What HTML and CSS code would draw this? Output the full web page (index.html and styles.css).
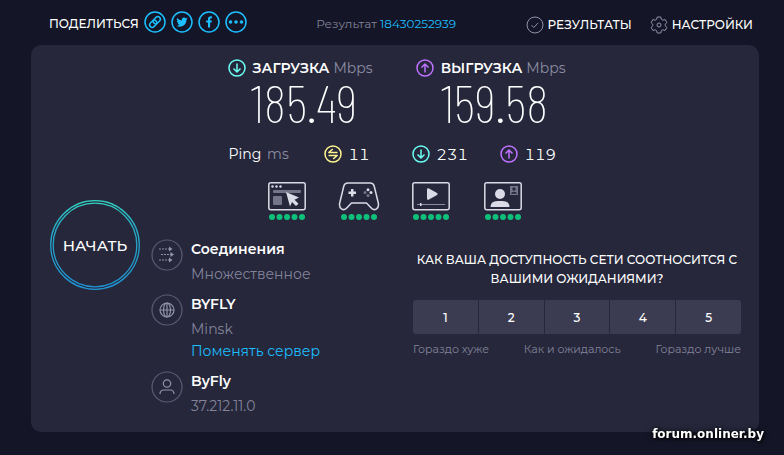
FILE: index.html
```html
<!DOCTYPE html>
<html lang="ru">
<head>
    <meta charset="UTF-8">
    <meta name="viewport" content="width=device-width, initial-scale=1.0">
    <title>Speedtest</title>
    <link rel="stylesheet" href="styles.css">
</head>
<body>
    <svg class="sprite" aria-hidden="true">
        <symbol id="arrow-down" viewBox="0 0 18 18">
            <circle cx="9" cy="9" r="8"/>
            <path d="M9 4.500v8.500M5.500 9.500L9 13l3.500-3.500"/>
        </symbol>
        <symbol id="arrow-up" viewBox="0 0 18 18">
            <circle cx="9" cy="9" r="8"/>
            <path d="M9 13.500V5M5.500 8.500L9 5l3.500 3.500"/>
        </symbol>
        <symbol id="dots" viewBox="0 0 38 6">
            <circle cx="4" cy="3" r="3"/><circle cx="11.500" cy="3" r="3"/><circle cx="19" cy="3" r="3"/><circle cx="26.500" cy="3" r="3"/><circle cx="34" cy="3" r="3"/>
        </symbol>
    </svg>

    <header class="header">
        <div class="share">
            <span class="share-label">ПОДЕЛИТЬСЯ</span>
            <a class="share-link" href="#" aria-label="Ссылка">
                <svg viewBox="0 0 22 22"><circle cx="11" cy="11" r="10"/><g transform="rotate(-45 11 11)"><rect x="4.500" y="8.500" width="8" height="5" rx="2.500"/><rect x="9.500" y="8.500" width="8" height="5" rx="2.500"/></g></svg>
            </a>
            <a class="share-link" href="#" aria-label="Twitter">
                <svg viewBox="0 0 22 22"><circle cx="11" cy="11" r="10"/><path class="fill" d="M16.500 7.500q-.6.3-1.300.4.700-.4 1-1.200-.7.400-1.500.6a2.300 2.300 0 0 0-3.900 2.100q-2.800-.2-4.700-2.400-1 1.900.7 3.100-.6 0-1-.3 0 1.800 1.800 2.300-.5.200-1 .1.500 1.500 2.100 1.600-1.400 1.100-3.300.9 1.600 1 3.500 1c4.200 0 6.700-3.500 6.500-6.900q.7-.5 1.100-1.300z"/></svg>
            </a>
            <a class="share-link" href="#" aria-label="Facebook">
                <svg viewBox="0 0 22 22"><circle cx="11" cy="11" r="10"/><path class="fill" d="M10 16.500v-5H8.200V9.400H10V8c0-1.900 1.100-2.800 2.700-2.800h1.200v2h-.8c-.7 0-1 .3-1 .9v1.300h1.800l-.3 2.100h-1.500v5z"/></svg>
            </a>
            <a class="share-link" href="#" aria-label="Ещё">
                <svg viewBox="0 0 22 22"><circle cx="11" cy="11" r="10"/><circle class="fill" cx="5.500" cy="11" r="1.800"/><circle class="fill" cx="11" cy="11" r="1.800"/><circle class="fill" cx="16.500" cy="11" r="1.800"/></svg>
            </a>
        </div>
        <p class="result-id">Результат <a href="#">18430252939</a></p>
        <nav class="nav">
            <a href="#">
                <svg viewBox="0 0 18 18"><circle cx="9" cy="9" r="8"/><path d="M5.500 9.200l2.300 2.300 4.400-4.600"/></svg>
                РЕЗУЛЬТАТЫ
            </a>
            <a href="#">
                <svg viewBox="0 0 18 18"><circle cx="9" cy="9" r="2"/><path d="M7.200 1h3.600l.5 2.300 1.500.9 2.300-.7 1.800 3.100L15.200 8.200v1.600l1.700 1.600-1.800 3.100-2.300-.7-1.500.9-.5 2.300H7.200l-.5-2.300-1.500-.9-2.300.7-1.800-3.100 1.700-1.600V8.200L1.100 6.600l1.800-3.100 2.300.7 1.500-.9z"/></svg>
                НАСТРОЙКИ
            </a>
        </nav>
    </header>

    <main class="card">
        <button class="start" type="button">
            <svg viewBox="0 0 90 90" aria-hidden="true">
                <defs>
                    <linearGradient id="ring" x1="0" y1="0" x2="0" y2="1">
                        <stop offset="0" stop-color="#32d2c0"/>
                        <stop offset=".3" stop-color="#26a9c4"/>
                        <stop offset="1" stop-color="#1f92d4"/>
                    </linearGradient>
                </defs>
                <circle cx="45" cy="45" r="44.300"/>
                <circle cx="45" cy="45" r="41.800"/>
            </svg>
            <span>НАЧАТЬ</span>
        </button>

        <section class="results">
            <div class="speeds">
                <div class="speed">
                    <h2><svg class="icon down"><use href="#arrow-down"/></svg>ЗАГРУЗКА <small>Mbps</small></h2>
                    <p>185.49</p>
                </div>
                <div class="speed">
                    <h2><svg class="icon up"><use href="#arrow-up"/></svg>ВЫГРУЗКА <small>Mbps</small></h2>
                    <p>159.58</p>
                </div>
            </div>
            <div class="pings">
                <span class="ping-label">Ping <small>ms</small></span>
                <span class="ping"><svg class="icon idle" viewBox="0 0 18 18"><circle cx="9" cy="9" r="8"/><path d="M13.500 7.500H4.800l4-3.500M4.500 10.500h8.700l-4 3.500"/></svg>11</span>
                <span class="ping"><svg class="icon down"><use href="#arrow-down"/></svg>231</span>
                <span class="ping"><svg class="icon up"><use href="#arrow-up"/></svg>119</span>
            </div>
            <div class="quality">
                <div class="quality-item">
                    <svg class="picture" viewBox="0 0 42 30"><rect x="2.800" y="1.800" width="36.400" height="27" rx="2"/><g class="light"><circle cx="6.500" cy="5.500" r="1.200"/><circle cx="10.500" cy="5.500" r="1.200"/><circle cx="14.500" cy="5.500" r="1.200"/></g><g class="dim"><rect x="7" y="9" width="28" height="3" rx="1"/><rect x="7" y="15" width="9" height="9" rx="1"/></g><path class="light" d="M20 11l13 5.500-4.500 2.200 4 4-2.500 2.300-4-4-2 4.500z"/></svg>
                    <svg class="dots"><use href="#dots"/></svg>
                </div>
                <div class="quality-item">
                    <svg class="picture" viewBox="0 0 42 30"><path d="M10 2h22q3.500 0 4.300 3.500l4 16.500c1.200 6-4.300 8.500-7.300 4.800L28.500 22h-15L9 26.800C6 30.500.5 28 1.700 22l4-16.500Q6.500 2 10 2z"/><path class="light" d="M13 8h2.500v2.500H18V13h-2.500v2.500H13V13h-2.500v-2.500H13z"/><g class="light"><circle cx="30" cy="8.700" r="1.500"/><circle cx="33" cy="11.500" r="1.500"/></g><g class="dim"><circle cx="27" cy="11.500" r="1.500"/><circle cx="30" cy="14.500" r="1.500"/></g></svg>
                    <svg class="dots"><use href="#dots"/></svg>
                </div>
                <div class="quality-item">
                    <svg class="picture" viewBox="0 0 42 30"><rect x="2.800" y="1.800" width="36.400" height="27" rx="2"/><path class="light" d="M17 8.500q0-2 2-1l8 4.500q1.500 1 0 2l-8 4.500q-2 1-2-1z"/><path class="thin" d="M7 23.500h28"/><path class="light" d="M10 22h1.500v3H10z"/></svg>
                    <svg class="dots"><use href="#dots"/></svg>
                </div>
                <div class="quality-item">
                    <svg class="picture" viewBox="0 0 42 30"><rect x="2.800" y="1.800" width="36.400" height="27" rx="2"/><circle class="light" cx="18" cy="13" r="5"/><path class="light" d="M8.500 26q0-6 7-6h5q7 0 7 6z"/><rect class="dim" x="28" y="5" width="8" height="9"/><g class="dark"><circle cx="32" cy="8" r="1.700"/><path d="M29.200 12.700q0-2 2.800-2t2.800 2z"/></g></svg>
                    <svg class="dots"><use href="#dots"/></svg>
                </div>
            </div>
        </section>

        <section class="details">
            <div class="detail">
                <svg class="detail-icon" viewBox="0 0 32 32"><circle cx="16" cy="16" r="15"/><g class="glyph" stroke-dasharray="2 1"><path d="M8 10h10M10 15.500h10M8 21h10"/></g><path class="gray" d="M18 7.500l3.500 2.500-3.500 2.500zM19.500 13l3.500 2.500-3.500 2.500zM18 18.500l3.500 2.500-3.500 2.500z"/></svg>
                <div>
                    <h3>Соединения</h3>
                    <p>Множественное</p>
                </div>
            </div>
            <div class="detail">
                <svg class="detail-icon" viewBox="0 0 32 32"><circle cx="16" cy="16" r="15"/><g class="glyph"><circle cx="16" cy="16" r="7"/><ellipse cx="16" cy="16" rx="3.500" ry="7"/><path d="M16 9v14M9 16h14"/></g></svg>
                <div>
                    <h3>BYFLY</h3>
                    <p>Minsk</p>
                    <a href="#">Поменять сервер</a>
                </div>
            </div>
            <div class="detail">
                <svg class="detail-icon" viewBox="0 0 32 32"><circle cx="16" cy="16" r="15"/><g class="glyph"><circle cx="16" cy="12.500" r="3.700"/><path d="M9 23q0-4 4-4h6q4 0 4 4"/></g></svg>
                <div>
                    <h3>ByFly</h3>
                    <p>37.212.11.0</p>
                </div>
            </div>
        </section>

        <section class="survey">
            <h3>КАК ВАША ДОСТУПНОСТЬ СЕТИ СООТНОСИТСЯ С ВАШИМИ ОЖИДАНИЯМИ?</h3>
            <div class="rating">
                <button type="button">1</button>
                <button type="button">2</button>
                <button type="button">3</button>
                <button type="button">4</button>
                <button type="button">5</button>
            </div>
            <div class="legend">
                <span>Гораздо хуже</span>
                <span>Как и ожидалось</span>
                <span>Гораздо лучше</span>
            </div>
        </section>
    </main>
    <div class="watermark">forum.onliner.by</div>
</body>
</html>
```
FILE: styles.css
```css
* {
    box-sizing: border-box;
}
body {
    margin: 0;
    background-color: #141526;
    color: #fff;
    font-family: Montserrat, Inter, "Noto Sans", sans-serif;
    font-size: 14px;
}
h2, h3, p {
    margin: 0;
}
a {
    color: #1cbfff;
    text-decoration: none;
}
svg {
    display: block;
    flex: none;
    fill: none;
    stroke-linejoin: round;
}
.sprite {
    position: absolute;
    width: 0;
    height: 0;
}

.header {
    display: flex;
    justify-content: space-between;
    align-items: center;
    height: 45px;
    padding: 2px 31px 0 49px;
}
.share {
    display: flex;
    align-items: center;
    gap: 5px;
    padding-bottom: 4px;
}
.share-label {
    font-size: 12px;
    font-weight: 500;
    padding-top: 3px;
}
.share-link svg {
    width: 22px;
    height: 22px;
    stroke: #1cbfff;
    stroke-width: 1.5;
}
.share-link .fill {
    fill: #1cbfff;
    stroke: none;
}
.result-id {
    color: #83849a;
    font-size: 12px;
}
.nav {
    display: flex;
    gap: 18px;
    padding-top: 2px;
}
.nav a {
    display: flex;
    align-items: center;
    gap: 4px;
    color: #fff;
    font-size: 12px;
    font-weight: 500;
}
.nav svg {
    width: 18px;
    height: 18px;
    stroke: #9193a8;
}

.card {
    display: grid;
    grid-template-columns: 90px 1fr 328px;
    grid-template-rows: auto 1fr;
    column-gap: 11px;
    margin: 0 25px 0 31px;
    padding: 13px 18px 6px 19px;
    border-radius: 10px;
    background-color: #26273b;
}
.start {
    display: grid;
    place-items: center;
    grid-area: 1 / 1 / 3 / 2;
    align-self: center;
    width: 90px;
    height: 90px;
    margin-top: 6px;
    padding: 0;
    border: 0;
    border-radius: 50%;
    background: none;
    color: #fff;
    font-family: inherit;
    font-size: 15px;
    font-weight: 500;
    cursor: pointer;
}
.start svg, .start span {
    grid-area: 1 / 1;
}
.start svg {
    width: 90px;
    height: 90px;
    stroke: url(#ring);
    stroke-width: 1.3;
}

.results {
    grid-area: 1 / 1 / 2 / 4;
    justify-self: center;
    width: 340px;
}
small {
    color: #8b8ca2;
    font-size: inherit;
    font-weight: 400;
}
.icon {
    width: 18px;
    height: 18px;
    stroke-width: 1.5;
}
.down {
    stroke: #6afff3;
}
.up {
    stroke: #bf71ff;
}
.idle {
    stroke: #fff38e;
}
.speeds {
    display: flex;
    justify-content: space-between;
    padding-left: 2px;
}
.speed h2 {
    display: flex;
    align-items: center;
    gap: 4px;
    font-size: 14px;
    font-weight: 600;
    line-height: 20px;
}
.speed .icon {
    margin-right: 3px;
}
.speed p {
    font-family: "Barlow Condensed", "Roboto Condensed", Roboto, sans-serif;
    font-size: 54px;
    font-weight: 200;
    line-height: 48px;
    padding-left: 8px;
    text-align: center;
}
.pings {
    display: grid;
    grid-template-columns: 95px 88px 88px 1fr;
    align-items: center;
    height: 20px;
    margin-top: 18px;
    padding-left: 3px;
}
.ping-label small {
    padding-left: 2px;
}
.ping {
    display: flex;
    align-items: center;
    gap: 7px;
    font-size: 15px;
    font-variant-numeric: tabular-nums;
}
.quality {
    display: flex;
    justify-content: center;
    gap: 30px;
    margin-top: 17px;
    padding-right: 2px;
}
.picture {
    width: 42px;
    height: 30px;
    stroke: #dadbe6;
    stroke-width: 1.5;
}
.picture .light {
    fill: #dadbe6;
    stroke: none;
}
.picture .dim {
    fill: #747588;
    stroke: none;
}
.picture .dark {
    fill: #26273b;
    stroke: none;
}
.picture .thin {
    stroke: #8b8ca2;
    stroke-width: 1;
}
.dots {
    width: 38px;
    height: 6px;
    margin: 3px auto 0;
    fill: #0fc07a;
}

.details {
    grid-area: 2 / 2;
    padding-top: 19px;
}
.detail {
    display: flex;
    gap: 8px;
    margin-bottom: 6px;
}
.detail-icon {
    width: 32px;
    height: 32px;
    stroke: #5b5c72;
    stroke-width: 1.2;
}
.detail-icon .glyph {
    stroke: #9193a8;
}
.detail-icon .gray {
    fill: #9193a8;
    stroke: none;
}
.detail h3 {
    font-size: 14px;
    font-weight: 600;
    line-height: 20px;
}
.detail p {
    padding-top: 2px;
    color: #83849a;
    line-height: 27px;
}
.detail a {
    display: block;
    line-height: 16px;
    margin-bottom: 6px;
}

.survey {
    grid-area: 2 / 3;
    padding-top: 30px;
}
.survey h3 {
    font-size: 12px;
    font-weight: 500;
    line-height: 19px;
    text-align: center;
}
.rating {
    display: grid;
    grid-template-columns: repeat(5, 1fr);
    gap: 1px;
    margin-top: 12px;
    border-radius: 3px;
    overflow: hidden;
}
.rating button {
    height: 34px;
    padding: 0;
    border: 0;
    background-color: #3b3c51;
    color: #fff;
    font-family: inherit;
    font-size: 12px;
    font-weight: 500;
}
.legend {
    display: flex;
    justify-content: space-between;
    margin-top: 8px;
    color: #83849a;
    font-size: 11px;
    line-height: 15px;
}
.watermark {
    position: fixed;
    right: 20px;
    bottom: 14px;
    font-family: "DejaVu Sans", sans-serif;
    font-size: 12px;
    font-weight: bold;
    line-height: 14px;
    text-shadow: 1px 1px 3px #000, 0 0 6px #000;
}
```
